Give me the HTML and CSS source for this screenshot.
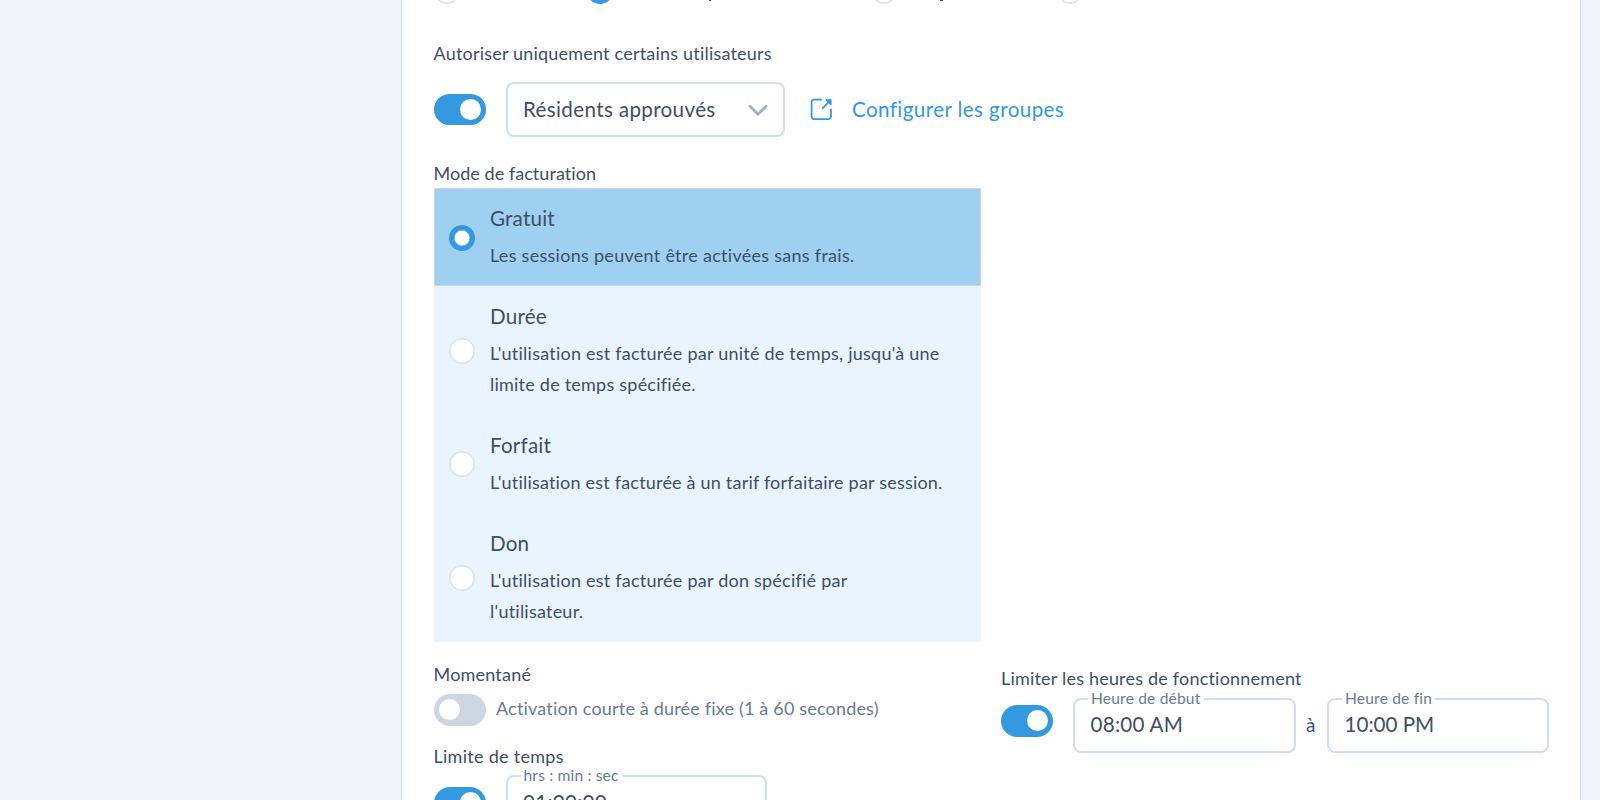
FILE: index.html
```html
<!DOCTYPE html>
<html lang="fr">
<head>
<meta charset="utf-8">
<title>Configuration</title>
<link rel="stylesheet" href="styles.css">
</head>
<body>
<main class="panel">
  <div class="choices">
    <span class="radio choice"></span><span class="radio choice on"></span><span class="radio choice"></span><span class="radio choice"></span>
    <i class="tail tail-p"></i><i class="tail tail-j"></i>
  </div>

  <div class="label label-users">Autoriser uniquement certains utilisateurs</div>
  <div class="row users">
    <span class="toggle on"></span>
    <div class="select">
      <span class="select-text">Résidents approuvés</span>
      <svg class="chevron" width="20" height="13" viewBox="0 0 20 13"><path d="M2 2.2l8 8L18 2.2" fill="none" stroke="#a0aec0" stroke-width="2.8" stroke-linecap="round" stroke-linejoin="round"/></svg>
    </div>
    <a class="link">
      <svg width="23" height="23" viewBox="0 0 23 23" fill="none" stroke="#3399e0" stroke-width="1.8" stroke-linecap="round" stroke-linejoin="round"><path d="M11 1.7H4.2A2.6 2.6 0 0 0 1.6 4.3v14.2a2.6 2.6 0 0 0 2.6 2.6h14.2a2.6 2.6 0 0 0 2.6-2.6V11.5"/><path d="M12.8 10.2L20.3 2.4"/><path d="M16 1.8h5v5z" fill="#3399e0" stroke-width="1.2"/></svg>
      <span class="link-text">Configurer les groupes</span>
    </a>
  </div>

  <div class="label label-mode">Mode de facturation</div>
  <div class="modes">
    <div class="mode selected">
      <span class="radio on"></span>
      <div><div class="mode-title">Gratuit</div><div class="mode-desc wide">Les sessions peuvent être activées sans frais.</div></div>
    </div>
    <div class="mode tall">
      <span class="radio"></span>
      <div><div class="mode-title">Durée</div><div class="mode-desc">L'utilisation est facturée par unité de temps, jusqu'à une<br>limite de temps spécifiée.</div></div>
    </div>
    <div class="mode">
      <span class="radio"></span>
      <div><div class="mode-title">Forfait</div><div class="mode-desc snug">L'utilisation est facturée à un tarif forfaitaire par session.</div></div>
    </div>
    <div class="mode tall">
      <span class="radio"></span>
      <div><div class="mode-title">Don</div><div class="mode-desc">L'utilisation est facturée par don spécifié par<br>l'utilisateur.</div></div>
    </div>
  </div>

  <div class="columns">
    <section class="left">
      <div class="label">Momentané</div>
      <div class="row momentary"><span class="toggle"></span><span class="hint">Activation courte à durée fixe (1 à 60 secondes)</span></div>
      <div class="label label-limit">Limite de temps</div>
      <div class="row limit">
        <span class="toggle on"></span>
        <div class="field duration"><span class="legend">hrs : min : sec</span>01:00:00</div>
      </div>
    </section>
    <section class="right">
      <div class="label">Limiter les heures de fonctionnement</div>
      <div class="row hours">
        <span class="toggle on"></span>
        <div class="field"><span class="legend">Heure de début</span>08:00 AM</div>
        <span class="to">à</span>
        <div class="field end"><span class="legend">Heure de fin</span>10:00 PM</div>
      </div>
    </section>
  </div>
</main>
</body>
</html>
```
FILE: styles.css
```css
* { box-sizing: border-box; }
body {
  margin: 0;
  height: 800px;
  overflow: hidden;
  background: #f0f4f9;
  color: #3d4f66;
  font-family: Lato, "Open Sans", sans-serif;
}
.panel {
  width: 1180px;
  height: 800px;
  margin-left: 401px;
  padding: 0 30.5px 0 31.5px;
  overflow: hidden;
  background: #fff;
  border: solid #d3ddeb;
  border-width: 0 1px;
}
.row { display: flex; align-items: center; }
.label { height: 30px; font-size: 18px; line-height: 30px; letter-spacing: 0.2px; white-space: nowrap; }

.radio {
  flex: none;
  width: 26px;
  height: 26px;
  border: 1px solid #d3ddea;
  border-radius: 50%;
  background: #fff;
  box-shadow: inset 0 0 0 0.5px #d3ddea;
}
.radio.on { border: 5px solid #3399e1; box-shadow: inset 0 0 0 0.5px #3399e1; }
.choices { position: relative; display: flex; height: 4px; align-items: flex-end; }
.choice + .choice { margin-left: 127px; }
.choice:nth-child(3) { margin-left: 258px; }
.choice:nth-child(4) { margin-left: 160px; }
.choice.on { background: #3399e1; }
.tail { position: absolute; top: 0; height: 1px; background: #3d4f66; }
.tail-p { left: 275px; width: 2px; }
.tail-j { left: 506px; width: 3px; }

.toggle {
  flex: none;
  width: 52px;
  height: 32px;
  padding: 5px;
  border-radius: 16px;
  background: #cdd7e3;
}
.toggle::before { content: ""; display: block; width: 21px; height: 21px; border-radius: 50%; background: #fff; }
.toggle.on { background: #3399e1; }
.toggle.on::before { margin-left: auto; }

.label-users { margin-top: 34px; }
.users { height: 56px; margin-top: 13px; }
.users .toggle { height: 31px; margin-top: 1px; }
.select {
  display: flex;
  align-items: center;
  justify-content: space-between;
  width: 279px;
  height: 55px;
  margin-left: 20.5px;
  padding: 0 15.5px 0 15px;
  border: 2px solid #d3ddeb;
  border-radius: 8px;
  font-size: 20.6px;
  letter-spacing: 0.35px;
}
.chevron { margin-top: 2px; }
.link { display: flex; align-items: center; gap: 19px; margin-left: 25px; color: #3399e0; font-size: 20.6px; letter-spacing: 0.4px; }
.select-text, .link-text { white-space: nowrap; }

.label-mode { margin-top: 21px; letter-spacing: 0.05px; }
.modes { width: 547.5px; height: 454px; background: #e9f4fe; }
.mode { display: flex; align-items: center; height: 98px; padding: 1px 15px; }
.mode > div { align-self: flex-start; margin-left: 15.5px; padding-top: 11px; }
.mode.tall { height: 129px; }
.mode.selected { padding: 1px 14px 0; background: #9fd0f2; border: 1px solid #c9d9e9; }
.mode.selected > div { padding-top: 10px; }
.mode-title { height: 36px; font-size: 20.6px; line-height: 36px; letter-spacing: 0.2px; }
.mode-desc { margin-top: 4px; font-size: 18px; line-height: 31px; letter-spacing: 0.23px; white-space: nowrap; }
.mode-desc.wide { letter-spacing: 0.28px; }
.mode-desc.snug { letter-spacing: 0.2px; }

.columns { display: grid; grid-template-columns: 567.5px 1fr; }
.left { padding-top: 17px; }
.right { padding-top: 21px; }
.momentary { height: 32px; margin-top: 5px; }
.hint { margin-left: 10.5px; padding-bottom: 3px; color: #687b94; font-size: 18px; line-height: 29px; letter-spacing: 0.18px; white-space: nowrap; }
.label-limit { margin-top: 15px; letter-spacing: 0.28px; }
.limit, .hours { align-items: flex-start; }
.limit { margin-top: 4px; }
.hours { margin-top: 5px; }
.limit .toggle { margin-top: 12px; }
.hours .toggle { margin-top: 7px; }
.field {
  position: relative;
  width: 223px;
  height: 55px;
  margin-left: 20px;
  padding-left: 15.5px;
  border: 2px solid #d3ddeb;
  border-radius: 8px;
  font-size: 20.6px;
  line-height: 48px;
  letter-spacing: 0.25px;
}
.field.duration { width: 261px; line-height: 50px; }
.field.end { margin-left: 11px; width: 222px; letter-spacing: 0; }
.legend {
  position: absolute;
  top: -5px;
  left: 13px;
  height: 6px;
  padding: 0 3px;
  background: #fff;
  color: #687b94;
  font-size: 15.6px;
  line-height: 6px;
  letter-spacing: 0.17px;
  white-space: nowrap;
}
.to { width: 10px; margin-left: 10px; font-size: 19px; line-height: 53px; }
```
